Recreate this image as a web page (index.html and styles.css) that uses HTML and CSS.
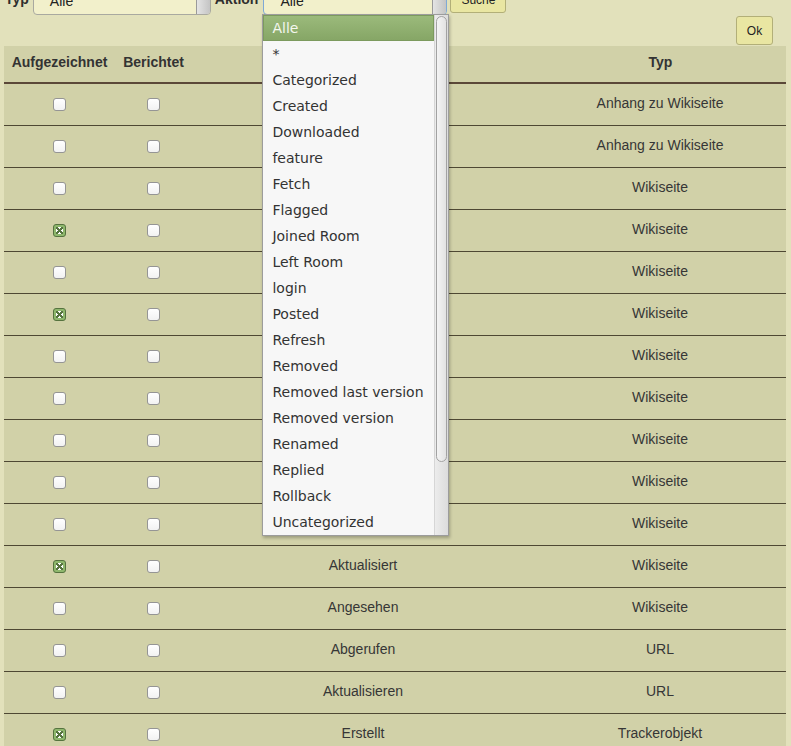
FILE: index.html
```html
<!DOCTYPE html>
<html lang="de">
<head>
    <meta charset="UTF-8">
    <meta name="viewport" content="width=device-width, initial-scale=1.0">
    <title>Aktionsprotokoll</title>
    <link rel="stylesheet" href="styles.css">
</head>
<body>
    <form class="filters">
        <label class="filter-label">Typ</label>
        <div class="select select-type">
            <span class="select-value">Alle</span>
            <span class="select-arrow"></span>
        </div>
        <label class="filter-label">Aktion</label>
        <div class="select select-action focused">
            <span class="select-value">Alle</span>
            <span class="select-arrow"></span>
            <div class="dropdown">
                <ul class="dropdown-items">
                    <li class="active">Alle</li>
                    <li>*</li>
                    <li>Categorized</li>
                    <li>Created</li>
                    <li>Downloaded</li>
                    <li>feature</li>
                    <li>Fetch</li>
                    <li>Flagged</li>
                    <li>Joined Room</li>
                    <li>Left Room</li>
                    <li>login</li>
                    <li>Posted</li>
                    <li>Refresh</li>
                    <li>Removed</li>
                    <li>Removed last version</li>
                    <li>Removed version</li>
                    <li>Renamed</li>
                    <li>Replied</li>
                    <li>Rollback</li>
                    <li>Uncategorized</li>
                </ul>
                <div class="dropdown-scroll"><span class="dropdown-thumb"></span></div>
            </div>
        </div>
        <button type="button" class="btn btn-search">Suche</button>
    </form>

    <div class="toolbar">
        <button type="button" class="btn btn-ok">Ok</button>
    </div>

    <table class="actionlog">
        <thead>
            <tr>
                <th class="col-rec">Aufgezeichnet</th>
                <th class="col-rep">Berichtet</th>
                <th class="col-action">Aktion</th>
                <th class="col-type">Typ</th>
            </tr>
        </thead>
        <tbody>
            <tr><td><span class="check"></span></td><td><span class="check"></span></td><td>Hochgeladen</td><td>Anhang zu Wikiseite</td></tr>
            <tr><td><span class="check"></span></td><td><span class="check"></span></td><td>Entfernt</td><td>Anhang zu Wikiseite</td></tr>
            <tr><td><span class="check"></span></td><td><span class="check"></span></td><td>Hinzugefügt</td><td>Wikiseite</td></tr>
            <tr><td><span class="check checked"></span></td><td><span class="check"></span></td><td>Erstellt</td><td>Wikiseite</td></tr>
            <tr><td><span class="check"></span></td><td><span class="check"></span></td><td>Entfernt</td><td>Wikiseite</td></tr>
            <tr><td><span class="check checked"></span></td><td><span class="check"></span></td><td>Gelöscht</td><td>Wikiseite</td></tr>
            <tr><td><span class="check"></span></td><td><span class="check"></span></td><td>Umbenannt</td><td>Wikiseite</td></tr>
            <tr><td><span class="check"></span></td><td><span class="check"></span></td><td>Zurückgesetzt</td><td>Wikiseite</td></tr>
            <tr><td><span class="check"></span></td><td><span class="check"></span></td><td>Beantwortet</td><td>Wikiseite</td></tr>
            <tr><td><span class="check"></span></td><td><span class="check"></span></td><td>Kategorisiert</td><td>Wikiseite</td></tr>
            <tr><td><span class="check"></span></td><td><span class="check"></span></td><td>Gesperrt</td><td>Wikiseite</td></tr>
            <tr><td><span class="check checked"></span></td><td><span class="check"></span></td><td>Aktualisiert</td><td>Wikiseite</td></tr>
            <tr><td><span class="check"></span></td><td><span class="check"></span></td><td>Angesehen</td><td>Wikiseite</td></tr>
            <tr><td><span class="check"></span></td><td><span class="check"></span></td><td>Abgerufen</td><td>URL</td></tr>
            <tr><td><span class="check"></span></td><td><span class="check"></span></td><td>Aktualisieren</td><td>URL</td></tr>
            <tr><td><span class="check checked"></span></td><td><span class="check"></span></td><td>Erstellt</td><td>Trackerobjekt</td></tr>
        </tbody>
    </table>
</body>
</html>
```

FILE: styles.css
```css
body {
    font-family: "Liberation Sans", Arial, sans-serif;
    font-size: 14px;
    margin: 0;
    padding: 0 5px 0 4px;
    background-color: #e2e1bb;
    color: #333;
}
.filters {
    display: flex;
    align-items: center;
    gap: 4px;
    height: 29px;
    margin: -14px 0 0 1px;
}
.filter-label {
    font-weight: bold;
    color: #2e2e2e;
    padding-bottom: 3px;
}
.select {
    position: relative;
    height: 28px;
    border: 1px solid #a9a9a0;
    border-radius: 0 0 4px 4px;
    background-color: #f2f0cb;
    box-sizing: border-box;
}
.select-type {
    width: 178px;
}
.select-action {
    width: 184px;
    margin-left: 1px;
}
.select.focused {
    border-color: #7fa9d6;
}
.select-value {
    display: block;
    padding: 5px 0 0 16px;
    color: #222;
}
.select-arrow {
    position: absolute;
    right: 0;
    top: 0;
    bottom: 0;
    width: 13px;
    border-left: 1px solid #9a9a9a;
    border-radius: 0 0 3px 0;
    background: linear-gradient(to right, #e4e4e4, #c4c4c4);
}
.dropdown {
    position: absolute;
    top: 100%;
    left: -2px;
    z-index: 10;
    display: flex;
    width: 187px;
    height: 522px;
    border: 1px solid #9c9c9c;
    box-sizing: border-box;
    background-color: #f7f7f7;
    box-shadow: 1px 2px 3px rgba(0,0,0,0.25);
    font-family: "DejaVu Sans", sans-serif;
    font-size: 14px;
}
.dropdown-items {
    list-style: none;
    margin: 0;
    padding: 0;
    width: 171px;
}
.dropdown-items li {
    height: 26px;
    line-height: 26px;
    padding-left: 9px;
    color: #333;
    white-space: nowrap;
}
.dropdown-items li.active {
    background: linear-gradient(to bottom, #9bba7b, #86a666);
    border: 1px solid #7c9a5e;
    height: 24px;
    line-height: 24px;
    padding-left: 8px;
    color: #f4f7ee;
}
.dropdown-scroll {
    flex: 1;
    padding: 1px 1px 0 1px;
    border-left: 1px solid #d6d6d6;
    background: linear-gradient(to right, #ececec, #dcdcdc);
}
.dropdown-thumb {
    display: block;
    height: 444px;
    border: 1px solid #a2a2a2;
    border-radius: 6px;
    background: linear-gradient(to right, #f4f4f4, #e2e2e2);
}
.btn {
    font-family: "Liberation Sans", Arial, sans-serif;
    font-size: 12px;
    color: #222;
    background-color: #e9e6a2;
    border: 1px solid #b2af78;
    border-radius: 3px;
    cursor: pointer;
}
.btn-search {
    width: 56px;
    height: 27px;
    margin: 0 0 2px -1px;
    padding: 0;
}
.toolbar {
    display: flex;
    justify-content: flex-end;
    padding: 1px 13px 1px 0;
}
.btn-ok {
    width: 37px;
    height: 29px;
    padding: 0;
}
.actionlog {
    width: 782px;
    border-collapse: separate;
    border-spacing: 0;
    background-color: #d1d1a8;
    table-layout: fixed;
}
.actionlog th {
    height: 38px;
    padding: 0 0 4px 1px;
    font-weight: bold;
    color: #333;
    text-align: center;
    border-bottom: 2px solid #5b4838;
    box-sizing: border-box;
}
.col-rec { width: 110px; }
.col-rep { width: 78px; }
.col-action { width: 342px; }
.col-type { width: 252px; }
.actionlog td {
    height: 42px;
    padding: 0 0 3px 0;
    text-align: center;
    vertical-align: middle;
    border-bottom: 1px solid #4e4833;
    box-sizing: border-box;
    color: #363636;
}
.check {
    display: inline-block;
    width: 13px;
    height: 13px;
    box-sizing: border-box;
    border: 1px solid #959595;
    border-radius: 3px;
    background: linear-gradient(to bottom, #fff, #f2f2f2);
    vertical-align: middle;
}
.check.checked {
    border-color: #56733f;
    background-color: #8fb86d;
    background-image: none;
    position: relative;
}
.check.checked::after {
    content: "";
    position: absolute;
    left: 2px;
    top: 2px;
    width: 7px;
    height: 7px;
    background:
        linear-gradient(45deg, transparent 38%, #56733f 38%, #56733f 62%, transparent 62%),
        linear-gradient(-45deg, transparent 38%, #56733f 38%, #56733f 62%, transparent 62%),
        #fff;
}
```
